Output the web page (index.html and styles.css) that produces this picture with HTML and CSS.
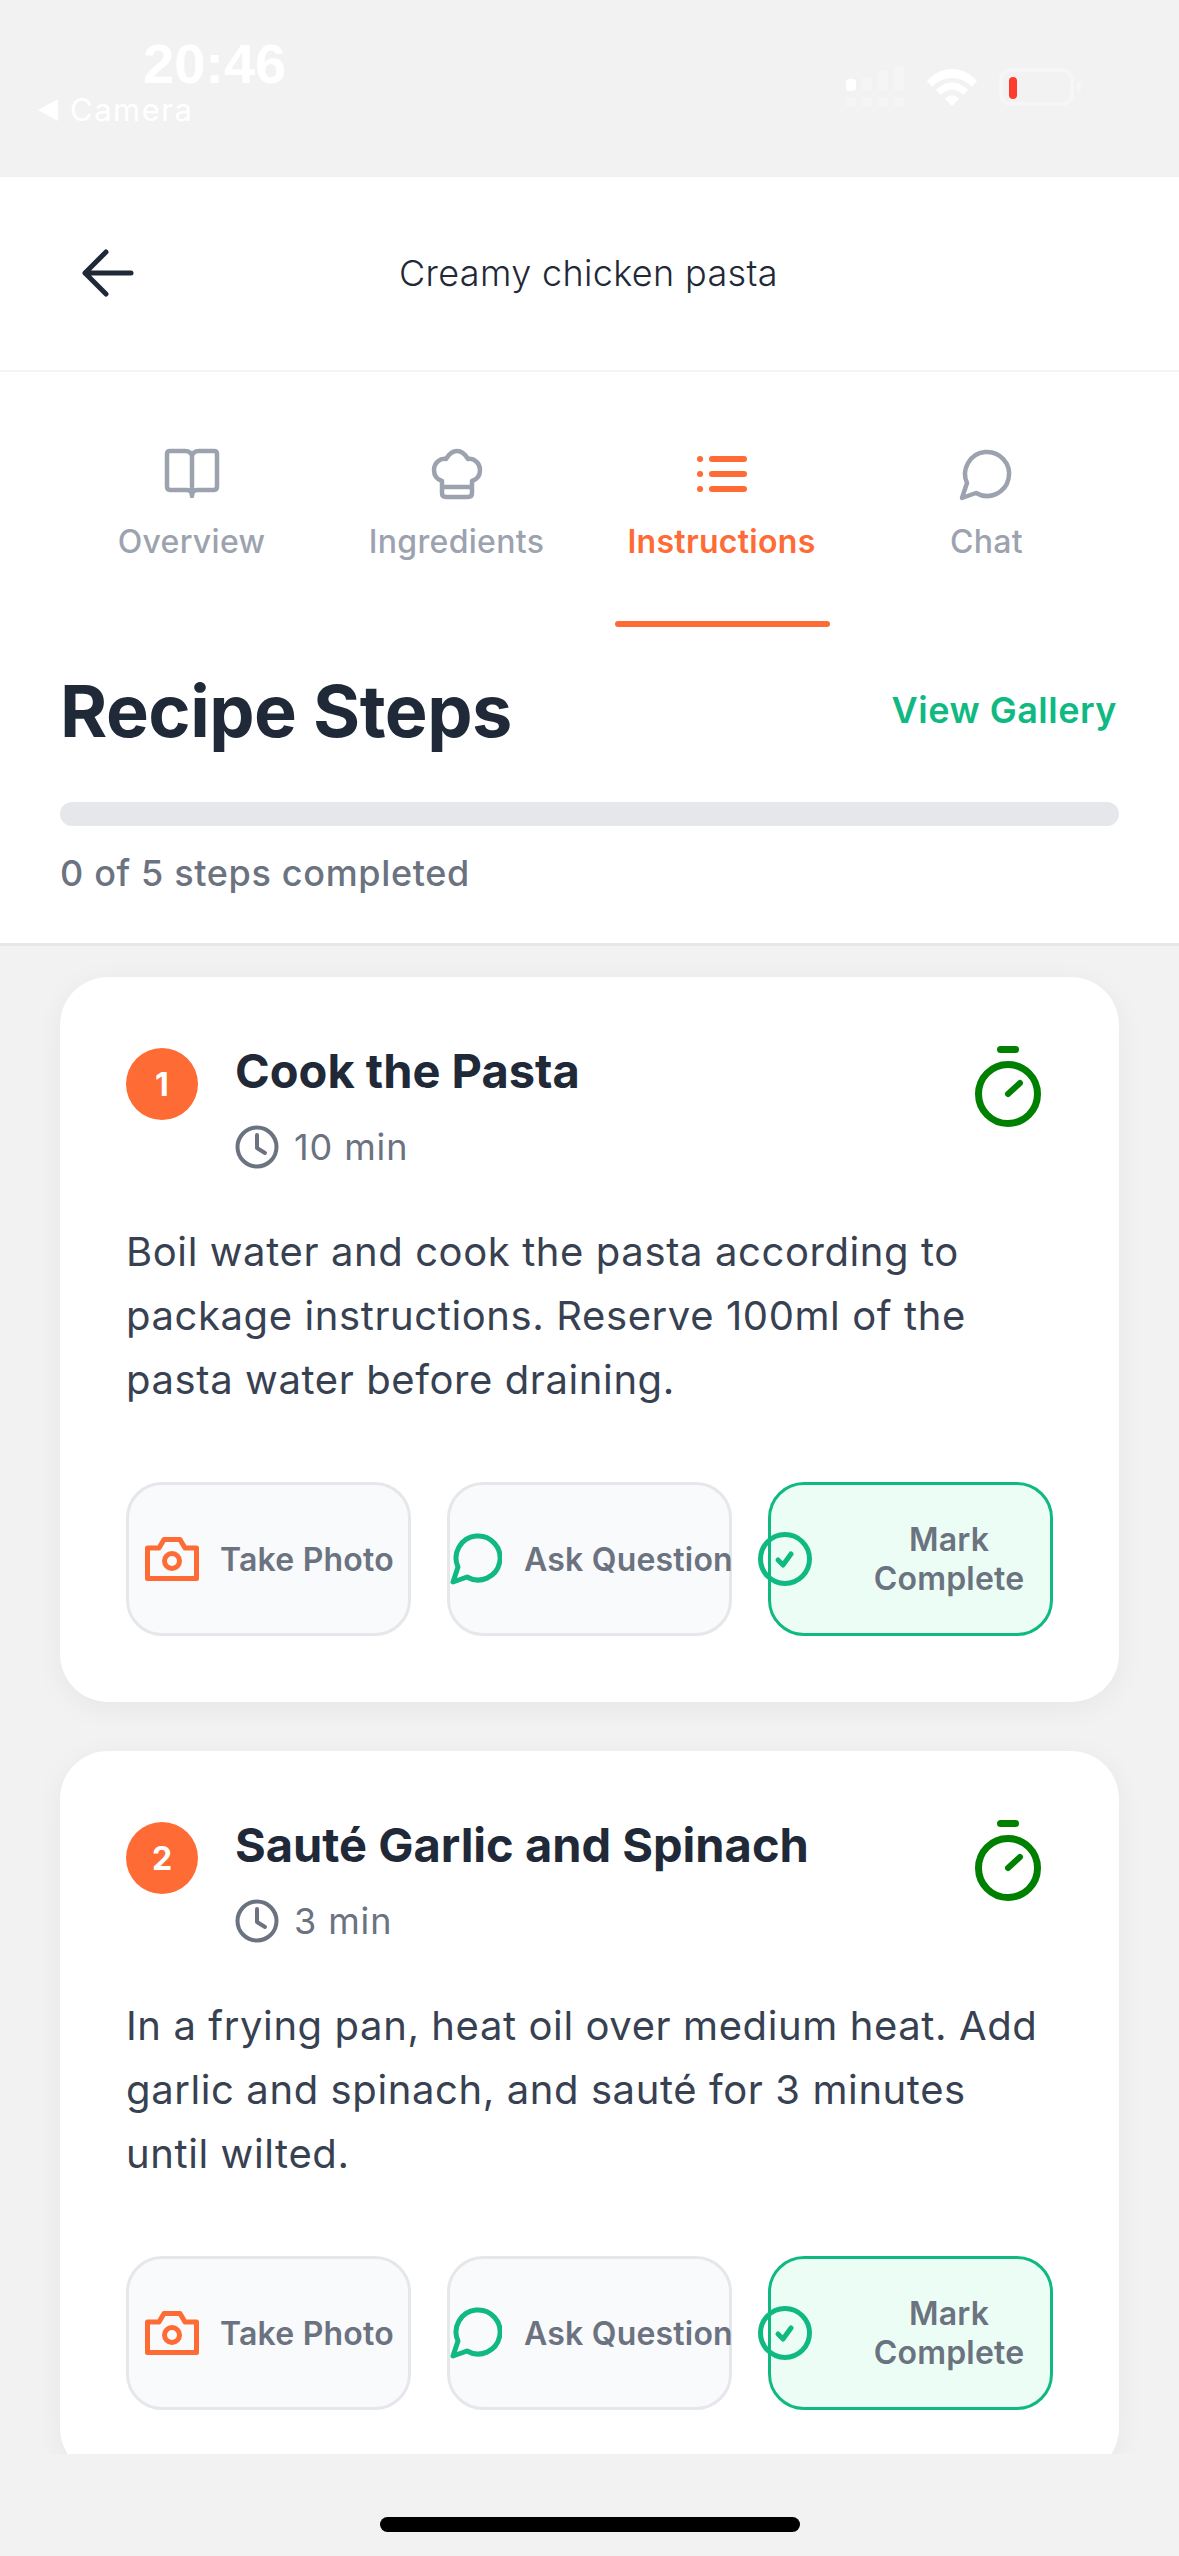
FILE: index.html
```html
<!DOCTYPE html>
<html lang="en">
<head>
    <meta charset="UTF-8">
    <meta name="viewport" content="width=device-width, initial-scale=1.0">
    <title>Creamy chicken pasta</title>
    <link rel="stylesheet" href="styles.css">
</head>
<body>
    <div class="status-bar">
        <div class="status-left">
            <div class="clock">20:46</div>
            <div class="back-app"><span class="back-tri"></span>Camera</div>
        </div>
        <div class="status-right">
            <svg class="signal" width="58" height="42" viewBox="0 0 58 42">
                <rect x="0" y="13" width="10" height="12" rx="3" fill="#fff"/>
                <rect x="16" y="11" width="10" height="14" rx="3" fill="#fff" opacity=".25"/>
                <rect x="32" y="5" width="10" height="20" rx="3" fill="#fff" opacity=".25"/>
                <rect x="48" y="0" width="10" height="25" rx="3" fill="#fff" opacity=".25"/>
                <rect x="0" y="31" width="10" height="10" rx="3" fill="#fff" opacity=".25"/>
                <rect x="16" y="31" width="10" height="10" rx="3" fill="#fff" opacity=".25"/>
                <rect x="32" y="31" width="10" height="10" rx="3" fill="#fff" opacity=".25"/>
                <rect x="48" y="31" width="10" height="10" rx="3" fill="#fff" opacity=".25"/>
            </svg>
            <svg class="wifi" width="50" height="37" viewBox="0 0 50 37" fill="#fff">
                <path d="M0 12C14 -4 36 -4 50 12L45 18C33 6 17 6 5 18Z"/>
                <path d="M9 21C18 11 32 11 41 21L36 26C29 19 21 19 14 26Z"/>
                <path d="M18 30C22 25 28 25 32 30L25 37Z"/>
            </svg>
            <div class="battery"><span class="battery-fill"></span></div>
            <span class="battery-nub"></span>
        </div>
    </div>

    <div class="app-header">
        <svg class="back-arrow" width="52" height="48" viewBox="0 0 52 48" fill="none" stroke="#1f2937" stroke-width="5" stroke-linecap="round" stroke-linejoin="round">
            <path d="M49 24H3M24 3L3 24L24 45"/>
        </svg>
        <div class="recipe-name">Creamy chicken pasta</div>
    </div>

    <div class="tabs">
        <div class="tab">
            <svg width="54" height="52" viewBox="0 0 54 52" fill="none" stroke="#9ca3af" stroke-width="4.5" stroke-linejoin="round" stroke-linecap="round">
                <path d="M27 8C27 4 24 2 20 2H5Q2 2 2 5V37Q2 41 5 41H22Q27 41 27 47Q27 41 32 41H49Q52 41 52 37V5Q52 2 49 2H34C30 2 27 4 27 8ZM27 8V47"/>
            </svg>
            <span>Overview</span>
        </div>
        <div class="tab">
            <svg width="50" height="52" viewBox="0 0 50 52" fill="none" stroke="#9ca3af" stroke-width="4.5" stroke-linejoin="round" stroke-linecap="round">
                <path d="M10 32C4 30 2 25 2 21C2 14 8 9 14 10C17 5 21 2 25 2C30 2 33 5 36 10C42 9 48 14 48 21C48 25 46 30 40 32V44Q40 48 36 48H14Q10 48 10 44ZM10 38H40"/>
            </svg>
            <span>Ingredients</span>
        </div>
        <div class="tab active">
            <svg width="50" height="52" viewBox="0 0 50 52" fill="none" stroke="#ff6b35" stroke-width="6" stroke-linecap="round">
                <path d="M15 10H47M15 25H47M15 40H47M3 10H3.1M3 25H3.1M3 40H3.1"/>
            </svg>
            <span>Instructions</span>
        </div>
        <div class="tab">
            <svg width="52" height="52" viewBox="2 0 52 52" fill="none" stroke="#9ca3af" stroke-width="4.5" stroke-linejoin="round" stroke-linecap="round">
                <path d="M8 34L3 49L17 44A22 22 0 1 0 8 34Z"/>
            </svg>
            <span>Chat</span>
        </div>
    </div>

    <div class="steps-top">
        <div class="steps-title-row">
            <h1>Recipe Steps</h1>
            <a class="gallery-link">View Gallery</a>
        </div>
        <div class="progress-track"></div>
        <div class="progress-text">0 of 5 steps completed</div>
    </div>

    <div class="steps-list">
        <div class="step-card">
            <div class="step-head">
                <div class="step-num">1</div>
                <div class="step-info">
                    <h2>Cook the Pasta</h2>
                    <div class="step-time">
                        <svg width="44" height="44" viewBox="0 0 44 44" fill="none" stroke="#6b7280" stroke-width="4" stroke-linecap="round" stroke-linejoin="round"><circle cx="22" cy="22" r="19.5"/><path d="M22 10V23L30 28"/></svg>
                        <span>10 min</span>
                    </div>
                </div>
                <svg class="timer" width="68" height="82" viewBox="0 0 68 82" fill="none" stroke="#008000" stroke-width="7" stroke-linecap="round">
                    <circle cx="34" cy="48" r="29.5"/><path d="M26.5 3.5H41.5"/><path d="M34 48L46 37" stroke-width="6"/>
                </svg>
            </div>
            <p>Boil water and cook the pasta according to package instructions. Reserve 100ml of the pasta water before draining.</p>
            <div class="step-actions">
                <div class="action-btn">
                    <svg width="54" height="44" viewBox="0 0 54 44" fill="none" stroke="#ff6b35" stroke-width="5" stroke-linejoin="round"><path d="M2.5 11H14L19 2.5H35L40 11H51.5V41.5H2.5Z"/><circle cx="27" cy="24" r="7.5"/></svg>
                    <span>Take Photo</span>
                </div>
                <div class="action-btn ask">
                    <svg width="52" height="52" viewBox="0 0 52 52" fill="none" stroke="#10b981" stroke-width="5" stroke-linejoin="round"><path d="M8 34L3 49L17 44A22 22 0 1 0 8 34Z"/></svg>
                    <span>Ask Question</span>
                </div>
                <div class="action-btn done">
                    <svg width="54" height="54" viewBox="0 0 54 54" fill="none" stroke="#10b981" stroke-width="5" stroke-linecap="round" stroke-linejoin="round"><circle cx="27" cy="27" r="24.5"/><path d="M20 28L25 33L33 22"/></svg>
                    <span>Mark Complete</span>
                </div>
            </div>
        </div>

        <div class="step-card">
            <div class="step-head">
                <div class="step-num">2</div>
                <div class="step-info">
                    <h2>Sauté Garlic and Spinach</h2>
                    <div class="step-time">
                        <svg width="44" height="44" viewBox="0 0 44 44" fill="none" stroke="#6b7280" stroke-width="4" stroke-linecap="round" stroke-linejoin="round"><circle cx="22" cy="22" r="19.5"/><path d="M22 10V23L30 28"/></svg>
                        <span>3 min</span>
                    </div>
                </div>
                <svg class="timer" width="68" height="82" viewBox="0 0 68 82" fill="none" stroke="#008000" stroke-width="7" stroke-linecap="round">
                    <circle cx="34" cy="48" r="29.5"/><path d="M26.5 3.5H41.5"/><path d="M34 48L46 37" stroke-width="6"/>
                </svg>
            </div>
            <p>In a frying pan, heat oil over medium heat. Add garlic and spinach, and sauté for 3 minutes until wilted.</p>
            <div class="step-actions">
                <div class="action-btn">
                    <svg width="54" height="44" viewBox="0 0 54 44" fill="none" stroke="#ff6b35" stroke-width="5" stroke-linejoin="round"><path d="M2.5 11H14L19 2.5H35L40 11H51.5V41.5H2.5Z"/><circle cx="27" cy="24" r="7.5"/></svg>
                    <span>Take Photo</span>
                </div>
                <div class="action-btn ask">
                    <svg width="52" height="52" viewBox="0 0 52 52" fill="none" stroke="#10b981" stroke-width="5" stroke-linejoin="round"><path d="M8 34L3 49L17 44A22 22 0 1 0 8 34Z"/></svg>
                    <span>Ask Question</span>
                </div>
                <div class="action-btn done">
                    <svg width="54" height="54" viewBox="0 0 54 54" fill="none" stroke="#10b981" stroke-width="5" stroke-linecap="round" stroke-linejoin="round"><circle cx="27" cy="27" r="24.5"/><path d="M20 28L25 33L33 22"/></svg>
                    <span>Mark Complete</span>
                </div>
            </div>
        </div>
    </div>

    <div class="home-area"><div class="home-bar"></div></div>
</body>
</html>
```

FILE: styles.css
```css
* {
    box-sizing: border-box;
}
html, body {
    margin: 0;
    padding: 0;
}
body {
    width: 1179px;
    height: 2556px;
    overflow: hidden;
    display: flex;
    flex-direction: column;
    background-color: #f2f2f2;
    font-family: Inter, "Liberation Sans", sans-serif;
    color: #1f2937;
}

/* status bar */
.status-bar {
    height: 177px;
    flex: none;
    display: flex;
    justify-content: space-between;
    color: #fff;
}
.status-left {
    padding: 35px 0 0 38px;
}
.clock {
    margin-left: 105px;
    font-family: "Liberation Sans", sans-serif;
    font-weight: 700;
    font-size: 56px;
    line-height: 58px;
}
.back-app {
    display: flex;
    align-items: center;
    gap: 12px;
    font-size: 31px;
    line-height: 38px;
    letter-spacing: 1.5px;
    margin-top: -2px;
}
.back-tri {
    width: 0;
    height: 0;
    border-top: 11px solid transparent;
    border-bottom: 11px solid transparent;
    border-right: 20px solid #fff;
}
.status-right {
    display: flex;
    align-items: flex-start;
    padding: 66px 98px 0 0;
}
.wifi {
    margin: 3px 0 0 23px;
}
.battery {
    margin: 2px 0 0 22px;
    width: 75px;
    height: 38px;
    padding: 6px;
    border: 4px solid rgba(255, 255, 255, 0.35);
    border-radius: 12px;
}
.battery-fill {
    display: block;
    margin-top: -1px;
    width: 8px;
    height: 22px;
    border-radius: 4px;
    background-color: #ff3b30;
}
.battery-nub {
    margin: 15px 0 0 3px;
    width: 4px;
    height: 12px;
    border-radius: 0 4px 4px 0;
    background-color: rgba(255, 255, 255, 0.35);
}

/* header */
.app-header {
    height: 195px;
    flex: none;
    position: relative;
    display: flex;
    align-items: center;
    justify-content: center;
    background-color: #fff;
    border-bottom: 2px solid #f3f4f6;
}
.back-arrow {
    position: absolute;
    left: 82px;
    top: 72px;
}
.recipe-name {
    font-size: 36px;
    font-weight: 300;
    letter-spacing: 0.35px;
    margin: 0 2px 2px 0;
}

/* tabs */
.tabs {
    height: 255px;
    flex: none;
    display: grid;
    grid-template-columns: repeat(4, 265px);
    padding: 0 59px;
    background-color: #fff;
}
.tab {
    position: relative;
    display: flex;
    flex-direction: column;
    align-items: center;
    padding-top: 77px;
    color: #9ca3af;
    font-size: 32px;
    font-weight: 500;
    letter-spacing: 0.3px;
    line-height: 38px;
}
.tab svg {
    margin-bottom: 22px;
    overflow: visible;
}
.tab.active {
    color: #ff6b35;
    font-weight: 600;
}
.tab.active::after {
    content: "";
    position: absolute;
    left: 26px;
    right: 24px;
    bottom: 0;
    height: 6px;
    border-radius: 3px;
    background-color: #ff6b35;
}

/* steps header */
.steps-top {
    height: 319px;
    flex: none;
    padding: 41px 60px 0;
    background-color: #fff;
    border-bottom: 3px solid #e5e7eb;
}
.steps-title-row {
    display: flex;
    justify-content: space-between;
    align-items: center;
    height: 84px;
}
h1 {
    margin: 0;
    font-size: 72px;
    font-weight: 700;
    letter-spacing: -0.5px;
}
.gallery-link {
    color: #10b981;
    font-size: 36px;
    font-weight: 600;
    letter-spacing: 0.5px;
    margin-right: 2px;
}
.progress-track {
    margin-top: 50px;
    height: 24px;
    border-radius: 12px;
    background-color: #e5e7eb;
}
.progress-text {
    margin-top: 25px;
    color: #6b7280;
    font-size: 36px;
    font-weight: 500;
    letter-spacing: 0.65px;
    line-height: 44px;
}

/* cards */
.steps-list {
    height: 1508px;
    flex: none;
    overflow: hidden;
    padding: 31px 60px 0;
    display: flex;
    flex-direction: column;
    gap: 49px;
}
.step-card {
    flex: none;
    padding: 64px 66px 0;
    height: 725px;
    border-radius: 48px;
    background-color: #fff;
    box-shadow: 0 6px 30px rgba(0, 0, 0, 0.05);
}
.step-head {
    display: flex;
    align-items: flex-start;
}
.step-num {
    width: 72px;
    height: 72px;
    flex: none;
    margin-top: 7px;
    border-radius: 50%;
    display: flex;
    align-items: center;
    justify-content: center;
    background-color: #ff6b35;
    color: #fff;
    font-size: 32px;
    font-weight: 700;
}
.step-info {
    flex: 1;
    margin-left: 37px;
    padding-top: 2px;
}
h2 {
    margin: 0;
    font-size: 47px;
    font-weight: 700;
    line-height: 56px;
}
.step-time {
    display: flex;
    align-items: center;
    gap: 15px;
    margin-top: 26px;
    color: #6b7280;
    font-size: 36px;
    letter-spacing: 0.9px;
    line-height: 44px;
}
.timer {
    flex: none;
    margin: 5px 11px 0 0;
}
.step-card p {
    margin: 51px 0 0;
    color: #374151;
    font-size: 40px;
    letter-spacing: 0.6px;
    line-height: 64px;
}
.step-actions {
    display: grid;
    grid-template-columns: repeat(3, 285px);
    gap: 36px;
    margin-top: 70px;
}
.action-btn {
    height: 154px;
    display: flex;
    align-items: center;
    gap: 21px;
    padding: 0 16px;
    border: 3px solid #e5e7eb;
    border-radius: 36px;
    background-color: #f9fafb;
    color: #6b7280;
    font-size: 32px;
    font-weight: 600;
    letter-spacing: 0.2px;
    white-space: nowrap;
}
.action-btn svg {
    flex: none;
}
.action-btn.ask {
    padding: 0;
    gap: 22px;
}
.action-btn.done {
    padding: 0;
    gap: 36px;
    border-color: #10b981;
    background-color: #ecfdf5;
    white-space: normal;
    text-align: center;
}
.action-btn.done svg {
    margin-left: -13px;
}

/* home indicator */
.home-area {
    flex: 1;
    position: relative;
}
.home-bar {
    position: absolute;
    left: 380px;
    top: 63px;
    width: 420px;
    height: 15px;
    border-radius: 8px;
    background-color: #000;
}
```
